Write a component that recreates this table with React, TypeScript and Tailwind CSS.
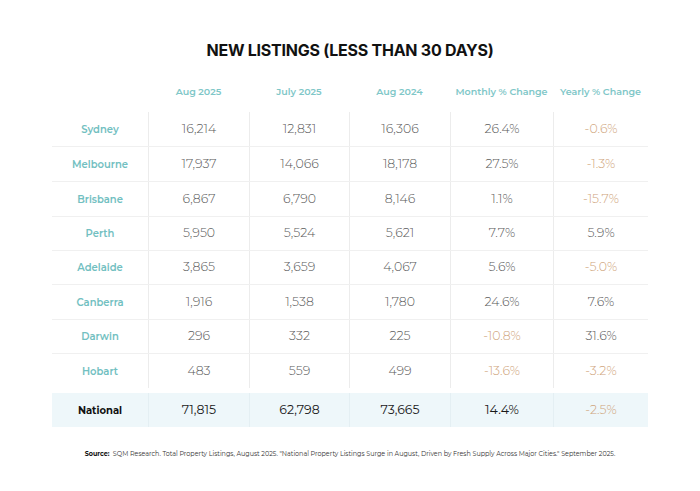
import React from "react";

const rows: [string, string, string, string, string, string][] = [
  ["Sydney", "16,214", "12,831", "16,306", "26.4%", "-0.6%"],
  ["Melbourne", "17,937", "14,066", "18,178", "27.5%", "-1.3%"],
  ["Brisbane", "6,867", "6,790", "8,146", "1.1%", "-15.7%"],
  ["Perth", "5,950", "5,524", "5,621", "7.7%", "5.9%"],
  ["Adelaide", "3,865", "3,659", "4,067", "5.6%", "-5.0%"],
  ["Canberra", "1,916", "1,538", "1,780", "24.6%", "7.6%"],
  ["Darwin", "296", "332", "225", "-10.8%", "31.6%"],
  ["Hobart", "483", "559", "499", "-13.6%", "-3.2%"],
];

const heights = ["h-[35px]", "h-[35px]", "h-[35px]", "h-[34px]", "h-[34px]", "h-[35px]", "h-[34px]", "h-[34px]"];

const cols = "grid grid-cols-[96px_101px_100px_101px_103px_95px]";

function valColor(v: string) {
  return v.startsWith("-") ? "text-[#cfa57c]" : "text-[#5b5b5b]";
}

export default function App() {
  return (
    <div
      className="w-[700px] h-[491px] bg-white flex flex-col items-center"
      style={{ fontFamily: '"Montserrat", "Noto Sans", "Open Sans", sans-serif' }}
    >
      <h1
        className="mt-[40px] text-[16px] leading-[20px] font-bold text-[#111] tracking-[-0.25px]"
        style={{ fontFamily: 'Inter, "Liberation Sans", sans-serif' }}
      >
        NEW LISTINGS (LESS THAN 30 DAYS)
      </h1>
      <div className="w-[596px] mt-[12px]">
        <div className={`${cols} h-[40px] items-center text-[9.5px] font-semibold text-[#7fc7c8]`}>
          <div />
          <div className="text-center">Aug 2025</div>
          <div className="text-center">July 2025</div>
          <div className="text-center">Aug 2024</div>
          <div className="text-center">Monthly % Change</div>
          <div className="text-center">Yearly % Change</div>
        </div>
        {rows.map((r, i) => (
          <div
            key={r[0]}
            className={`${cols} ${heights[i]} items-stretch ${i < rows.length - 1 ? "border-b border-[#f0f0f0]" : ""}`}
          >
            <div className="flex items-center justify-center text-[10px] font-semibold text-[#72c0c1]">{r[0]}</div>
            {r.slice(1).map((v, j) => (
              <div
                key={j}
                className={`flex items-center justify-center text-[12.5px] font-light border-l border-[#ececec] ${valColor(v)}`}
              >
                {v}
              </div>
            ))}
          </div>
        ))}
        <div className={`${cols} h-[34px] mt-[5px] bg-[#eef7fa] items-stretch`}>
          <div className="flex items-center justify-center text-[10px] font-bold text-[#111]">National</div>
          {["71,815", "62,798", "73,665", "14.4%", "-2.5%"].map((v, j) => (
            <div
              key={j}
              className={`flex items-center justify-center text-[12.5px] border-l border-[#e4eff3] ${
                v.startsWith("-") ? "text-[#cfa57c] font-light" : "text-[#1a1a1a] font-normal"
              }`}
            >
              {v}
            </div>
          ))}
        </div>
      </div>
      <p className="mt-[23px] text-[6.4px] text-[#333] whitespace-nowrap">
        <span className="font-bold text-[#111]">Source:</span>&nbsp; SQM Research. Total Property Listings, August 2025. "National Property Listings Surge in August, Driven by Fresh Supply Across Major Cities." September 2025.
      </p>
    </div>
  );
}
